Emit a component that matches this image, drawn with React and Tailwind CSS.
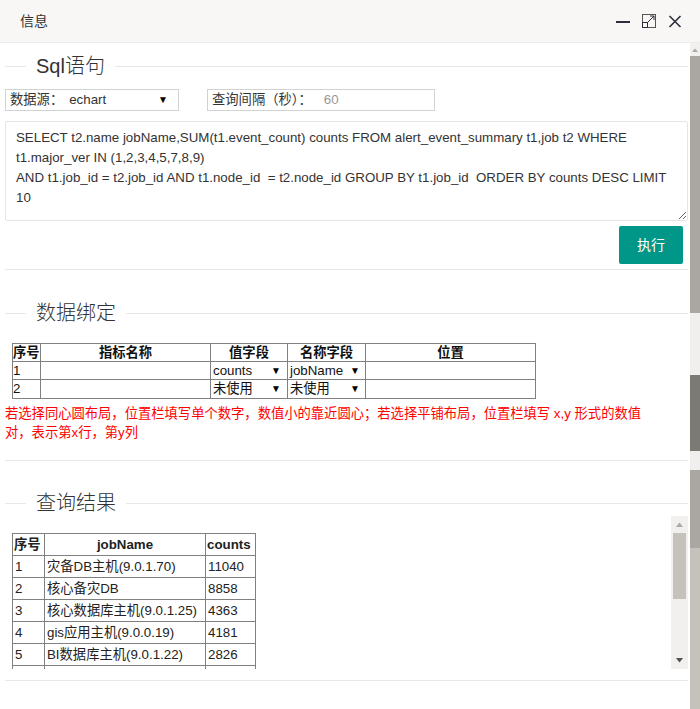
import React from "react";

const FONT = { fontFamily: '"Liberation Sans", "Noto Sans CJK SC", sans-serif' };

function Legend({ title, className = "" }) {
  return (
    <div className={"flex items-center h-[26px] " + className}>
      <div className="w-[21px] h-px bg-[#e8e8e8]" />
      <div className="px-[10px] text-[20px] font-light text-[#333] leading-[26px]">{title}</div>
      <div className="flex-1 h-px bg-[#e8e8e8]" />
    </div>
  );
}

function Arrow() {
  return <span className="text-[10px] leading-none text-black">▼</span>;
}

const bindRows = [
  { no: "1", val: "counts", name: "jobName", h: "h-[18px]" },
  { no: "2", val: "未使用", name: "未使用", h: "h-[19px]" },
];

const results = [
  ["1", "灾备DB主机(9.0.1.70)", "11040"],
  ["2", "核心备灾DB", "8858"],
  ["3", "核心数据库主机(9.0.1.25)", "4363"],
  ["4", "gis应用主机(9.0.0.19)", "4181"],
  ["5", "BI数据库主机(9.0.1.22)", "2826"],
  ["", "", ""],
];

const sql =
  "SELECT t2.name jobName,SUM(t1.event_count) counts FROM alert_event_summary t1,job t2 WHERE\nt1.major_ver IN (1,2,3,4,5,7,8,9)\nAND t1.job_id = t2.job_id AND t1.node_id  = t2.node_id GROUP BY t1.job_id  ORDER BY counts DESC LIMIT\n10";

const cell = "border border-[#808080] p-0 whitespace-nowrap";

export default function App() {
  return (
    <div style={FONT} className="w-[700px] h-[709px] overflow-hidden bg-white flex flex-col text-[#333]">
      {/* header */}
      <div className="h-[43px] shrink-0 bg-[#f8f7f5] border-b border-[#ececec] flex items-center pl-[20px] pr-[18px]">
        <div className="text-[14px] text-[#333] flex-1">信息</div>
        <div className="flex items-center gap-[12px]">
          <svg width="14" height="14" viewBox="0 0 14 14">
            <rect x="0" y="7" width="14" height="2" fill="#2e2d3c" />
          </svg>
          <svg width="14" height="14" viewBox="0 0 14 14" fill="none" stroke="#2e2d3c" strokeWidth="1">
            <rect x="0.5" y="0.5" width="13" height="13" stroke="#555" />
            <rect x="0.5" y="8.5" width="5" height="5" />
            <path d="M6 8 L12 2 M8 2 H12 V6" />
          </svg>
          <svg width="14" height="14" viewBox="0 0 14 14" fill="none" stroke="#2e2d3c" strokeWidth="1.6">
            <path d="M1.5 2 L12.5 13 M12.5 2 L1.5 13" />
          </svg>
        </div>
      </div>

      <div className="flex-1 flex min-h-0">
        {/* main content */}
        <div className="flex-1 min-w-0 pl-[5px] pr-[2px] flex flex-col">
          <Legend title="Sql语句" className="mt-[10px]" />

          <div className="mt-[10px] flex items-center gap-[28px] text-[13.3px]">
            <div className="w-[174px] h-[22px] border border-[#d2d2d2] flex items-center pl-[4px] pr-[10px]">
              <span className="text-[#333]">数据源：</span>
              <span className="ml-[6px] flex-1 text-[#333]">echart</span>
              <Arrow />
            </div>
            <div className="w-[228px] h-[22px] border border-[#d2d2d2] flex items-center pl-[4px]">
              <span className="text-[#333]">查询间隔（秒）：</span>
              <span className="ml-[12px] text-[#999]">60</span>
            </div>
          </div>

          <textarea
            readOnly
            wrap="off"
            value={sql}
            className="mt-[10px] h-[100px] w-full border border-[#e6e6e6] rounded-[2px] px-[10px] py-[6px] text-[13.3px] leading-[20px] text-[#333] overflow-hidden resize-y outline-none"
            style={FONT}
          />

          <div className="mt-[5px] flex justify-end pr-[5px]">
            <div className="h-[38px] w-[64px] bg-[#009688] text-white text-[14px] flex items-center justify-center rounded-[2px]">
              执行
            </div>
          </div>

          <div className="mt-[5px] h-px bg-[#e8e8e8]" />

          <Legend title="数据绑定" className="mt-[30px]" />

          <table className="mt-[17px] ml-[7px] border-collapse text-[13.3px] text-[#111] leading-[16px] w-[523px] table-fixed">
            <colgroup>
              <col className="w-[28px]" />
              <col className="w-[170px]" />
              <col className="w-[77px]" />
              <col className="w-[78px]" />
              <col className="w-[170px]" />
            </colgroup>
            <thead>
              <tr>
                <th className={cell + " h-[18px] text-left font-bold"}>序号</th>
                <th className={cell + " font-bold"}>指标名称</th>
                <th className={cell + " font-bold"}>值字段</th>
                <th className={cell + " font-bold"}>名称字段</th>
                <th className={cell + " font-bold"}>位置</th>
              </tr>
            </thead>
            <tbody>
              {bindRows.map((r, i) => (
                <tr key={i}>
                  <td className={cell + " " + r.h}>{r.no}</td>
                  <td className={cell}></td>
                  <td className={cell}>
                    <div className="flex items-center pl-[2px] pr-[6px]">
                      <span className="flex-1">{r.val}</span>
                      <Arrow />
                    </div>
                  </td>
                  <td className={cell}>
                    <div className="flex items-center pl-[2px] pr-[5px]">
                      <span className="flex-1">{r.name}</span>
                      <Arrow />
                    </div>
                  </td>
                  <td className={cell}></td>
                </tr>
              ))}
            </tbody>
          </table>

          <div className="mt-[5px] text-[13.3px] leading-[19px] text-[#ff0000] pr-[40px]">
            若选择同心圆布局，位置栏填写单个数字，数值小的靠近圆心；若选择平铺布局，位置栏填写 x,y 形式的数值对，表示第x行，第y列
          </div>

          <div className="mt-[18px] h-px bg-[#e8e8e8]" />

          <Legend title="查询结果" className="mt-[29px]" />

          <div className="h-[153px] flex overflow-hidden">
            <div className="flex-1 min-w-0 pt-[17px] pl-[7px] overflow-hidden">
              <table className="border-collapse text-[13.3px] text-[#222] leading-[21px] table-fixed w-[243px]">
                <colgroup>
                  <col className="w-[32px]" />
                  <col className="w-[161px]" />
                  <col className="w-[50px]" />
                </colgroup>
                <thead>
                  <tr>
                    <th className="border border-[#808080] px-[1px] h-[22px] text-left font-bold whitespace-nowrap">序号</th>
                    <th className="border border-[#808080] px-[1px] font-bold">jobName</th>
                    <th className="border border-[#808080] px-[1px] text-left font-bold">counts</th>
                  </tr>
                </thead>
                <tbody>
                  {results.map((r, i) => (
                    <tr key={i}>
                      <td className="border border-[#808080] px-[2px] h-[22px]">{r[0]}</td>
                      <td className="border border-[#808080] px-[2px] whitespace-nowrap">{r[1]}</td>
                      <td className="border border-[#808080] px-[2px]">{r[2]}</td>
                    </tr>
                  ))}
                </tbody>
              </table>
            </div>
            {/* inner scrollbar */}
            <div className="w-[17px] shrink-0 bg-[#f1f0ee] flex flex-col items-center">
              <svg width="9" height="17" viewBox="0 0 9 17" className="shrink-0">
                <path d="M1 11 L4.5 6.5 L8 11 Z" fill="#a9a9a9" />
              </svg>
              <div className="w-[13px] h-[66px] bg-[#c5c2bb]" />
              <div className="flex-1" />
              <svg width="9" height="17" viewBox="0 0 9 17" className="shrink-0">
                <path d="M1 6 L8 6 L4.5 10.5 Z" fill="#505050" />
              </svg>
            </div>
          </div>

          <div className="mt-[11px] h-px bg-[#e8e8e8]" />
        </div>

        {/* main scrollbar */}
        <div className="w-[10px] shrink-0 flex flex-col">
          <div className="h-[13px] bg-[#f1f0ee] flex items-center justify-center">
            <svg width="8" height="6" viewBox="0 0 8 6">
              <path d="M1 5 L4 1.5 L7 5 Z" fill="#a9a9a9" />
            </svg>
          </div>
          <div className="h-[257px] bg-[#aaa6a2]" />
          <div className="h-[62px] bg-[#f0efed]" />
          <div className="h-[76px] bg-[#7b7a75]" />
          <div className="h-[19px] bg-[#f0efed]" />
          <div className="h-[78px] bg-[#aaa6a2]" />
          <div className="flex-1 bg-[#c5c2bb]" />
        </div>
      </div>
    </div>
  );
}
